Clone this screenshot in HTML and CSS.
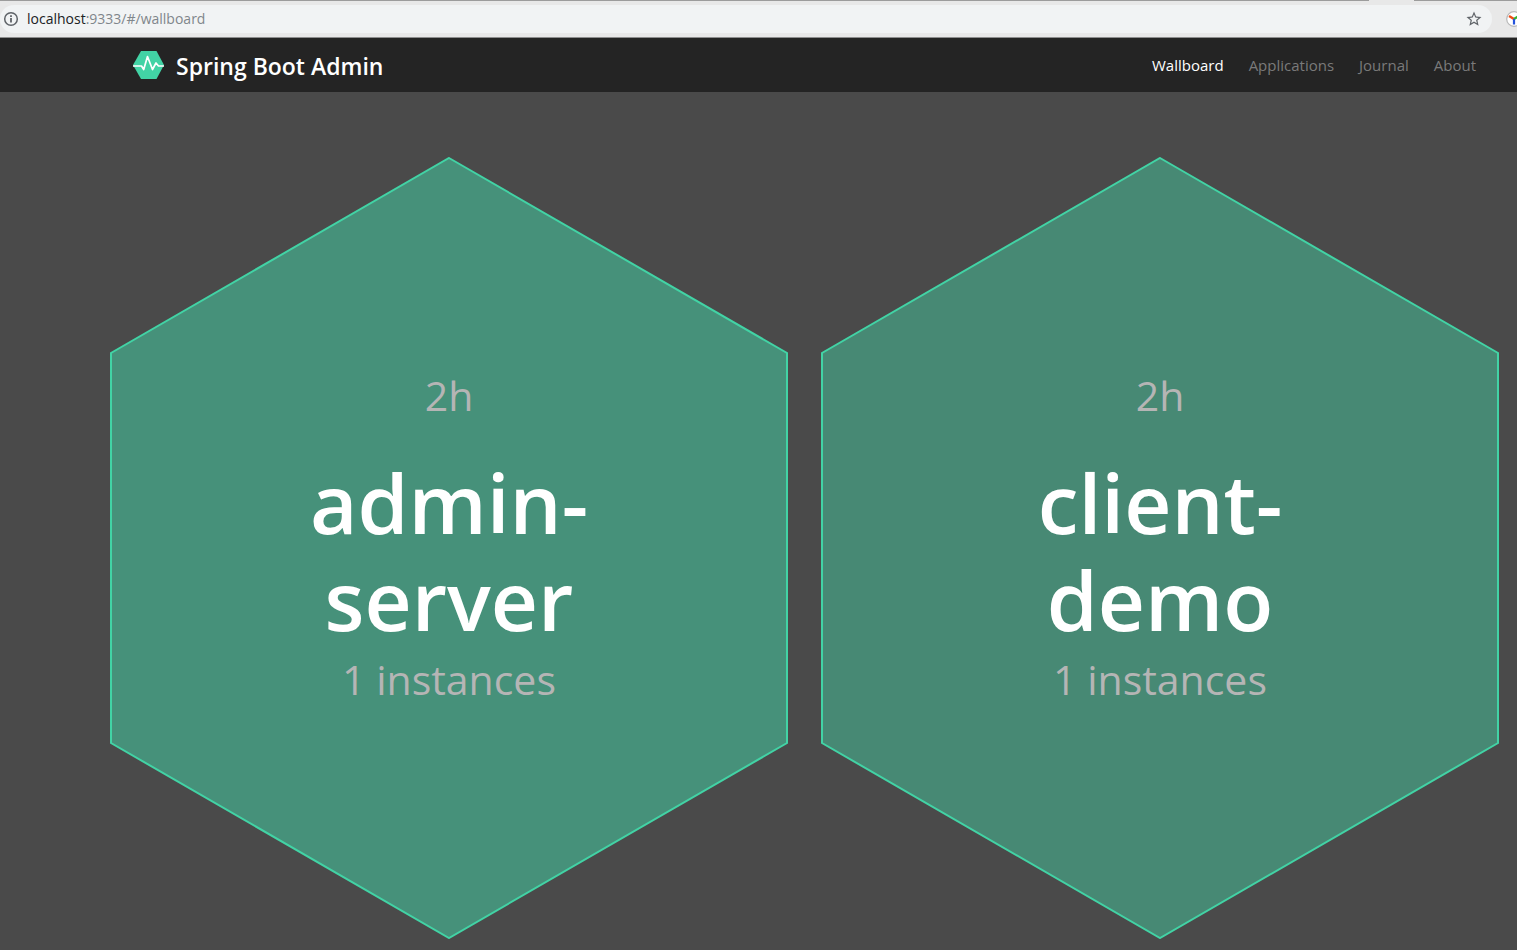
FILE: index.html
```html
<!DOCTYPE html>
<html lang="en">
<head>
<meta charset="utf-8">
<title>Spring Boot Admin</title>
<link rel="stylesheet" href="styles.css">
</head>
<body>
<div class="browser">
  <div class="tab-edge"><span class="tab-edge-left"></span><span class="tab-edge-right"></span></div>
  <div class="toolbar">
    <div class="address">
      <button class="icon-button" type="button" aria-label="Site information">
        <svg width="16" height="16" viewBox="0 0 16 16"><circle cx="8" cy="8" r="6.300" fill="none" stroke="#5f6368" stroke-width="1.500"/><path d="M8 7v4.500M8 4.200v1.700" stroke="#5f6368" stroke-width="1.800"/></svg>
      </button>
      <div class="url"><span class="url-host">localhost</span>:9333/#/wallboard</div>
      <button class="icon-button" type="button" aria-label="Bookmark this page">
        <svg width="18" height="18" viewBox="0 0 24 24"><path fill="#5f6368" d="M22 9.24l-7.19-.62L12 2 9.19 8.63 2 9.24l5.46 4.73L5.82 21 12 17.27 18.18 21l-1.63-7.03L22 9.24zM12 15.4l-3.76 2.27 1-4.28-3.32-2.88 4.38-.38L12 6.1l1.71 4.04 4.38.38-3.32 2.88 1 4.28L12 15.4z"/></svg>
      </button>
    </div>
    <button class="icon-button extension" type="button" aria-label="Extension">
      <svg width="16" height="16" viewBox="0 0 16 16"><circle cx="8" cy="8" r="7.300" fill="#fff" stroke="#b8b8b8" stroke-width="1.200"/><path d="M3 5l5 3" stroke="#f04a16" stroke-width="2.400"/><path d="M8 8l5-3" stroke="#35b335" stroke-width="2.400"/><path d="M8 8v5.500" stroke="#2453dc" stroke-width="2.200"/></svg>
    </button>
  </div>
</div>
<header class="navbar">
  <a class="brand" href="#/">
    <svg width="31" height="28" viewBox="0 0 31 28"><path d="M8 0h15.500L31 14l-7.500 14H8L0 14z" fill="#42d3a5"/><path d="M0 15h8.500l2.200 3.500L14.500 5.500l5 13L23 12l2.500 3H31" fill="none" stroke="#fff" stroke-width="1.700" stroke-linejoin="round"/></svg>
    <span>Spring Boot Admin</span>
  </a>
  <nav class="menu">
    <a class="active" href="#/wallboard">Wallboard</a>
    <a href="#/applications">Applications</a>
    <a href="#/journal">Journal</a>
    <a href="#/about">About</a>
  </nav>
</header>
<main class="wallboard">
  <article class="app">
    <svg class="hexagon" viewBox="0 0 678 782"><path d="M339 1L677 196V586L339 781L1 586V196z"/></svg>
    <div class="details">
      <div class="meta">2h</div>
      <h1 class="name">admin-<br>server</h1>
      <div class="meta">1 instances</div>
    </div>
  </article>
  <article class="app app-dim">
    <svg class="hexagon" viewBox="0 0 678 782"><path d="M339 1L677 196V586L339 781L1 586V196z"/></svg>
    <div class="details">
      <div class="meta">2h</div>
      <h1 class="name">client-<br>demo</h1>
      <div class="meta">1 instances</div>
    </div>
  </article>
</main>
</body>
</html>
```
FILE: styles.css
```css
* {
  box-sizing: border-box;
}

body {
  margin: 0;
  background: #4a4a4a;
  font-family: "Open Sans", "Noto Sans", sans-serif;
  overflow-x: hidden;
}

a {
  color: inherit;
  text-decoration: none;
}

svg {
  display: block;
}

.browser {
  background: #e8e8e8;
  border-bottom: 1px solid #8e8e8e;
}

.tab-edge {
  display: flex;
  gap: 45px;
  height: 1px;
}

.tab-edge-left {
  flex: 1;
  background: #9c9c9c;
}

.tab-edge-right {
  width: 103px;
  background: #9c9c9c;
}

.toolbar {
  display: flex;
  align-items: center;
  gap: 14px;
  height: 36px;
  overflow: hidden;
}

.address {
  display: flex;
  flex: 1;
  align-items: center;
  gap: 8px;
  height: 28px;
  padding: 0 9px 0 3px;
  border-radius: 14px;
  background: #f1f3f4;
}

.icon-button {
  flex: none;
  padding: 0;
  border: 0;
  background: none;
}

.extension {
  margin-right: -5px;
}

.url {
  flex: 1;
  color: #80868b;
  font-size: 14px;
  line-height: 20px;
}

.url-host {
  color: #202124;
}

.navbar {
  display: flex;
  align-items: center;
  justify-content: space-between;
  height: 54px;
  padding: 0 41px 0 133px;
  background: #242424;
}

.brand {
  display: flex;
  align-items: center;
  gap: 12px;
  color: #fff;
  font-size: 23px;
  font-weight: 600;
  line-height: 32px;
}

.brand span {
  padding-top: 2px;
}

.menu {
  display: flex;
  gap: 25px;
  color: #7a7a7a;
  font-size: 15px;
  line-height: 24px;
}

.menu .active {
  color: #fff;
}

.wallboard {
  display: grid;
  grid-template-columns: 1fr 1fr;
  gap: 33px;
  padding: 65px 18px 10px 110px;
}

.app {
  display: grid;
}

.hexagon,
.details {
  grid-area: 1 / 1;
}

.hexagon {
  width: 100%;
  fill: #46917a;
  stroke: #42d3a5;
  stroke-width: 2;
}

.app-dim .hexagon {
  fill: #478974;
}

.details {
  display: flex;
  flex-direction: column;
  align-items: center;
  justify-content: center;
  padding-bottom: 22px;
  text-align: center;
}

.meta {
  color: #b5b5b5;
  font-size: 41px;
  line-height: 62px;
}

.name {
  margin: 28px 0 0;
  color: #fff;
  font-size: 82px;
  font-weight: 600;
  line-height: 97px;
}
```
